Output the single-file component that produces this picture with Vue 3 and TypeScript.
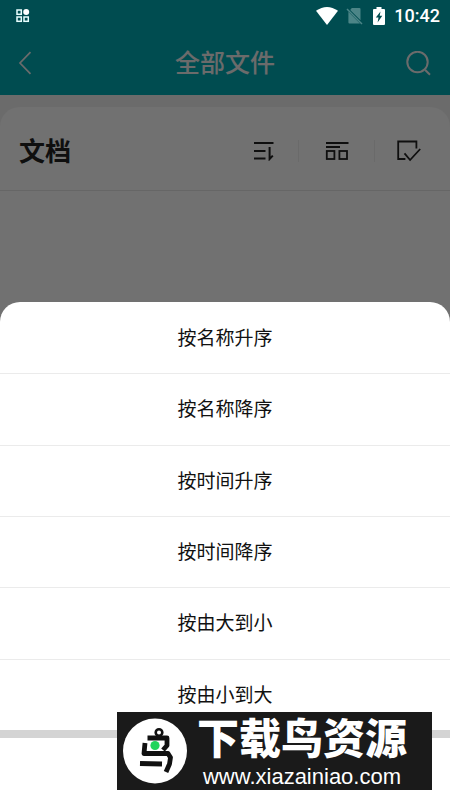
<script setup lang="ts">
import { ref } from 'vue'

const options: string[] = [
  '按名称升序',
  '按名称降序',
  '按时间升序',
  '按时间降序',
  '按由大到小',
  '按由小到大',
]
const selected = ref<string | null>(null)
</script>

<template>
  <div class="screen">
    <div class="status">
      <svg class="apps" width="14" height="14" viewBox="0 0 14 14">
        <g fill="none" stroke="#e8ffff" stroke-width="1.5">
          <rect x="1" y="1" width="4.3" height="4.3" />
          <rect x="1" y="8" width="4.3" height="4.3" />
          <rect x="8" y="8" width="4.3" height="4.3" />
        </g>
        <circle cx="10.2" cy="3.1" r="3" fill="#fff" />
      </svg>
      <div class="indicators">
        <svg width="22" height="18" viewBox="0 0 22 18">
          <path d="M0 3.8 Q11 -3.8 22 3.8 L11 18 Z" fill="#fff" />
        </svg>
        <svg class="sim" width="17" height="18" viewBox="0 0 17 18">
          <path d="M5.8 1H13.5Q14.5 1 14.5 2V13.2L4.2 3Z M2.4 4.7L14 16.5H3.4Q2.4 16.5 2.4 15.5Z" fill="#4c8587" />
          <path d="M1 2L16 17" stroke="#4c8587" stroke-width="1.5" />
        </svg>
        <svg class="battery" width="12" height="18" viewBox="0 0 12 18">
          <path d="M3.5 0H8.5V2H11Q12 2 12 3V17Q12 18 11 18H1Q0 18 0 17V3Q0 2 1 2H3.5Z" fill="#fff" />
          <path d="M7.5 4.5L2.8 10.5H5.5L4.6 15.5L9.3 8.8H6.7Z" fill="#004c50" />
        </svg>
        <span class="time">10:42</span>
      </div>
    </div>

    <header class="nav">
      <button class="icon-button" aria-label="返回">
        <svg width="14" height="24" viewBox="0 0 14 24" fill="none" stroke="#eee" stroke-width="1.7">
          <path d="M12.5 1.2L2 12L12.5 22.8" />
        </svg>
      </button>
      <h1>全部文件</h1>
      <button class="icon-button" aria-label="搜索">
        <svg width="25" height="25" viewBox="0 0 25 25" fill="none" stroke="#eee" stroke-width="2">
          <circle cx="11.5" cy="11" r="10.2" />
          <path d="M19.2 19L24 23.8" />
        </svg>
      </button>
    </header>

    <main class="content">
      <section class="card">
        <div class="toolbar">
          <h2>文档</h2>
          <div class="tools">
            <button class="tool" aria-label="排序">
              <svg width="20" height="20" viewBox="0 0 20 20" fill="none" stroke="#222" stroke-width="2">
                <path d="M0 2H19.5M0 10H11.5M0 17.5H11.5M15.6 6V18L18.8 14.6" />
              </svg>
            </button>
            <button class="tool middle" aria-label="视图">
              <svg width="24" height="20" viewBox="0 0 24 20" fill="none" stroke="#222" stroke-width="1.8">
                <path d="M1 2H23.5M1 6H15" />
                <rect x="1.8" y="10" width="7.6" height="8" />
                <rect x="14.4" y="10" width="7.6" height="8" />
              </svg>
            </button>
            <button class="tool" aria-label="多选">
              <svg width="24" height="22" viewBox="0 0 24 22" fill="none" stroke="#222" stroke-width="1.8">
                <path d="M19.4 8.5V1.5H1.2V19H8.4M7.5 13.3L13.1 20L23.2 9" />
              </svg>
            </button>
          </div>
        </div>
      </section>
    </main>

    <div class="mask"></div>

    <div class="sheet" role="dialog" aria-label="排序">
      <div class="options">
        <button v-for="option in options" :key="option" class="option" @click="selected = option">
          {{ option }}
        </button>
      </div>
      <div class="sheet-footer"></div>
    </div>

    <aside class="brand">
      <svg class="logo" width="64" height="66" viewBox="0 0 64 66">
        <ellipse cx="32" cy="33" rx="32" ry="32.5" fill="#fff" />
        <g fill="none" stroke="#111" stroke-linejoin="round">
          <circle cx="36" cy="14.5" r="3.3" stroke-width="2.6" />
          <path d="M24.5 20H44V27.5L40 32" stroke-width="4.8" />
          <path d="M22 25L21 35.5H45L47.5 39.5L46.5 46L43 54" stroke-width="4.8" />
          <path d="M17 45.5L39 46" stroke-width="4.8" />
        </g>
        <circle cx="32" cy="27.5" r="4.6" fill="#22d45b" />
      </svg>
      <div class="brand-text">
        <strong>下载鸟资源</strong>
        <span>www.xiazainiao.com</span>
      </div>
    </aside>
  </div>
</template>

<style>
body {
  margin: 0;
}
</style>

<style scoped>
.screen {
  position: relative;
  display: flex;
  flex-direction: column;
  min-height: 100vh;
  overflow: hidden;
  background: #eee;
  font-family: Roboto, "Noto Sans CJK SC", sans-serif;
}

button {
  padding: 0;
  border: 0;
  background: none;
  font-family: inherit;
  cursor: pointer;
}

svg {
  display: block;
}

h1,
h2 {
  margin: 0;
  font-weight: 500;
}

.status {
  display: flex;
  align-items: center;
  justify-content: space-between;
  box-sizing: border-box;
  height: 31px;
  padding: 0 10px 0 16px;
  background: #00a8b2;
}

.apps,
.indicators {
  position: relative;
  z-index: 2;
}

.indicators {
  display: flex;
  align-items: center;
}

.sim {
  margin-left: 8px;
}

.battery {
  margin: 0 9px 0 10px;
}

.time {
  color: #fff;
  font-size: 18px;
  font-weight: 500;
  line-height: 20px;
}

.nav {
  display: flex;
  align-items: center;
  justify-content: space-between;
  height: 64px;
  padding: 0 18px;
  background: #00a8b2;
}

.icon-button {
  display: flex;
  width: 26px;
}

.nav h1 {
  padding-top: 2px;
  color: #eee;
  font-size: 25px;
  line-height: 32px;
}

.content {
  display: flex;
  flex: 1;
  padding-top: 12px;
}

.card {
  flex: 1;
  border-radius: 20px 20px 0 0;
  background: #fafafa;
}

.toolbar {
  display: flex;
  align-items: center;
  justify-content: space-between;
  box-sizing: border-box;
  height: 84px;
  padding: 4px 8px 0 19px;
  border-bottom: 1px solid #e3e3e3;
}

.toolbar h2 {
  padding-top: 2px;
  color: #222;
  font-size: 26px;
  font-weight: 700;
  line-height: 36px;
}

.tools {
  display: flex;
}

.tool {
  display: flex;
  align-items: center;
  justify-content: center;
  box-sizing: border-box;
  width: 68px;
  height: 22px;
}

.middle {
  width: 76px;
}

.tool + .tool {
  border-left: 1px solid #eaeaea;
}

.mask {
  position: absolute;
  inset: 0;
  z-index: 1;
  background: rgba(0, 0, 0, 0.55);
}

.sheet {
  position: absolute;
  right: 0;
  bottom: 0;
  left: 0;
  z-index: 3;
  overflow: hidden;
  border-radius: 20px 20px 0 0;
  background: #fff;
}

.options {
  display: grid;
  grid-template-rows: repeat(6, 1fr);
  height: 428px;
}

.option {
  padding-top: 2px;
  color: #111;
  font-size: 19px;
  line-height: 28px;
}

.option + .option {
  border-top: 1px solid #ebebeb;
}

.sheet-footer {
  height: 62px;
  border-top: 8px solid #d4d4d4;
}

.brand {
  position: absolute;
  right: 18px;
  bottom: 10px;
  z-index: 4;
  display: flex;
  align-items: center;
  gap: 3px;
  box-sizing: border-box;
  width: 315px;
  height: 78px;
  padding-left: 6px;
  background: #1a1a1a;
  color: #fff;
}

.brand-text {
  display: flex;
  flex: 1;
  flex-direction: column;
  align-items: center;
  padding: 2px 18px 0 0;
  white-space: nowrap;
}

.brand-text strong {
  font-size: 42px;
  font-weight: 900;
  line-height: 50px;
}

.brand-text span {
  font-family: "Liberation Sans", sans-serif;
  font-size: 22px;
  line-height: 24px;
}
</style>
